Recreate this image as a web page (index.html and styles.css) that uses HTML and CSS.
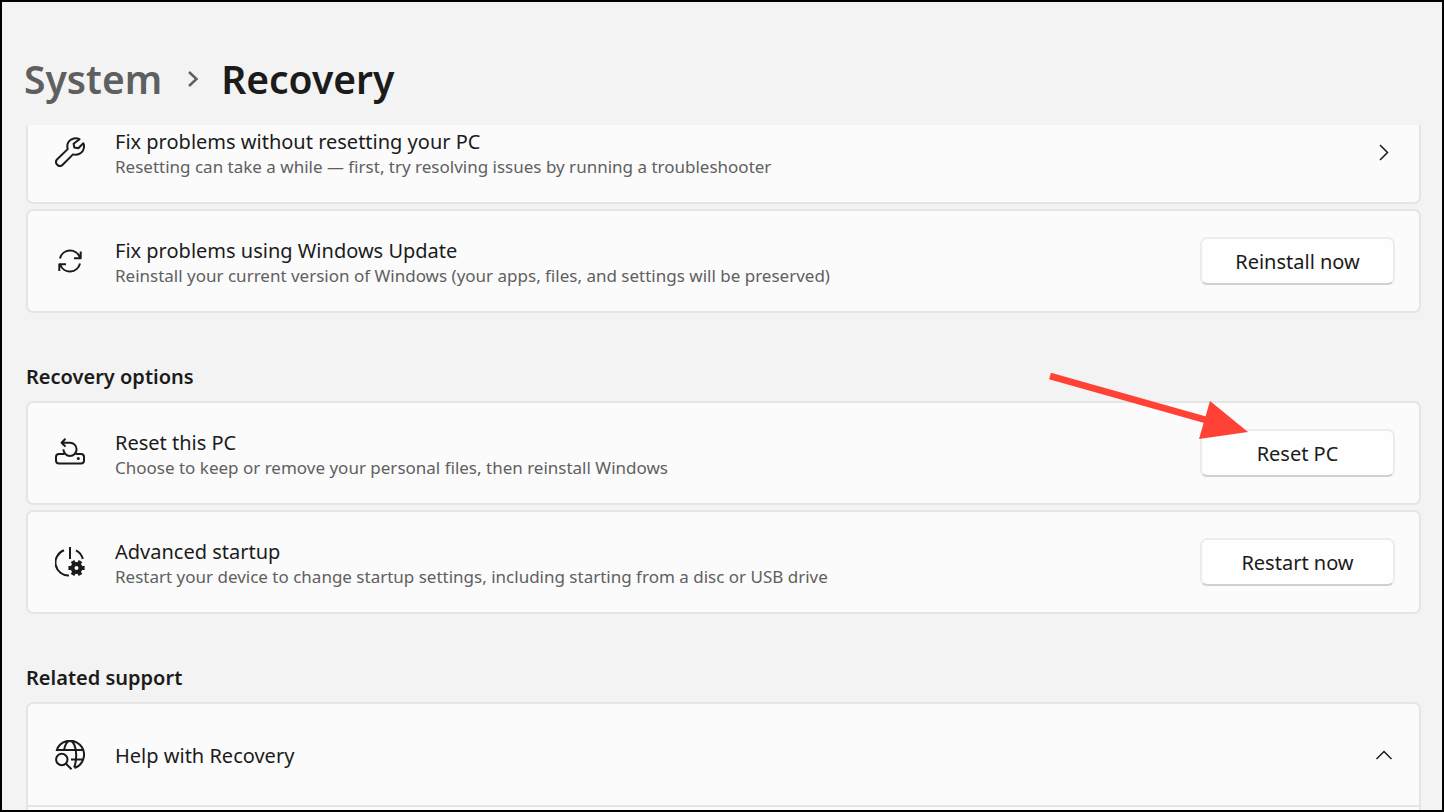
FILE: index.html
```html
<!DOCTYPE html>
<html lang="en">
<head>
    <meta charset="UTF-8">
    <meta name="viewport" content="width=device-width, initial-scale=1.0">
    <title>System - Recovery</title>
    <link rel="stylesheet" href="styles.css">
</head>
<body>
    <header class="breadcrumb">
        <a href="#" class="crumb">System</a>
        <svg class="crumb-arrow" viewBox="0 0 12 18" aria-hidden="true"><path d="M2 2l7.500 7L2 16"/></svg>
        <h1>Recovery</h1>
    </header>

    <main class="page">
        <div class="content">
            <a href="#" class="card">
                <svg class="icon" viewBox="0 0 30 30" aria-hidden="true">
                    <path d="M24.500 2.200C19.500-.3 12.200 3 12.300 9.500c0 1 .2 1.800.4 2.600L2.200 22.300c-3.400 3.700 1.700 9 5.500 5.500L18 17.400c6.500 1.700 11.500-3.300 11-8.600-.1-1-.3-1.800-.7-2.500l-5 5-4-.8-.7-3.700z"/>
                </svg>
                <div class="text">
                    <span class="title">Fix problems without resetting your PC</span>
                    <span class="desc">Resetting can take a while — first, try resolving issues by running a troubleshooter</span>
                </div>
                <svg class="chevron" viewBox="0 0 22 22" aria-hidden="true"><path d="M7 4l7.500 7.500L7 19"/></svg>
            </a>

            <div class="card">
                <svg class="icon" viewBox="0 0 30 30" aria-hidden="true">
                    <path d="M5 12.500A10.300 10.300 0 0 1 24.800 11.500M25.700 5.500v6.700h-6.700M25 17.500A10.300 10.300 0 0 1 5.200 18.500M4.300 25v-6.700h6.700"/>
                </svg>
                <div class="text">
                    <span class="title">Fix problems using Windows Update</span>
                    <span class="desc">Reinstall your current version of Windows (your apps, files, and settings will be preserved)</span>
                </div>
                <button type="button" class="action">Reinstall now</button>
            </div>

            <h2>Recovery options</h2>

            <div class="card">
                <svg class="icon" viewBox="0 0 30 30" aria-hidden="true">
                    <path d="M9.500 16H4a3 3 0 0 0-3 3v3.500a3 3 0 0 0 3 3h22a3 3 0 0 0 3-3V19a3 3 0 0 0-3-3h-5.500"/>
                    <path d="M10.500 .8L6.600 4.700l3.900 3.900M7 4.700h8a6.600 6.600 0 1 1-6.600 6.600"/>
                    <circle class="solid" cx="23.300" cy="20.500" r="1.500"/>
                </svg>
                <div class="text">
                    <span class="title">Reset this PC</span>
                    <span class="desc">Choose to keep or remove your personal files, then reinstall Windows</span>
                </div>
                <button type="button" class="action">Reset PC</button>
                <svg class="pointer" viewBox="0 0 202 70" aria-hidden="true">
                    <path class="pointer-line" d="M2 6l156 44"/>
                    <path class="pointer-head" d="M200 62l-38-31-11 38z"/>
                </svg>
            </div>

            <div class="card">
                <svg class="icon" viewBox="0 0 30 30" aria-hidden="true">
                    <path d="M15 0v12M9 3.300A13 13 0 0 0 14 28.500M21 3.300A13 13 0 0 1 27.800 12"/>
                    <circle class="gear" cx="21.500" cy="21" r="4"/>
                    <path class="gear" d="M26 21h3.600M23.800 24.900l1.700 3M19.200 24.900l-1.700 3M17 21h-3.600M19.200 17.100l-1.700-3M23.800 17.100l1.700-3"/>
                </svg>
                <div class="text">
                    <span class="title">Advanced startup</span>
                    <span class="desc">Restart your device to change startup settings, including starting from a disc or USB drive</span>
                </div>
                <button type="button" class="action">Restart now</button>
            </div>

            <h2>Related support</h2>

            <div class="expander">
                <button type="button" class="expander-head" aria-expanded="true">
                    <svg class="icon" viewBox="0 1 30 30" aria-hidden="true">
                        <path d="M1.500 12A14 14 0 1 1 19.500 29M2.500 11h25M16 20.500h12M9 11.500C10 5.500 12.500 2 15 2c3.500 0 6.200 6 6.200 14 0 5-.7 9.500-2.200 12.500"/>
                        <circle cx="6.800" cy="20.500" r="5.700"/>
                        <path d="M11 24.700l5.500 5.500"/>
                    </svg>
                    <span class="title">Help with Recovery</span>
                    <svg class="chevron" viewBox="0 0 22 22" aria-hidden="true"><path d="M3.500 15L11 7.500l7.500 7.500"/></svg>
                </button>
                <div class="expander-body"></div>
            </div>
        </div>
    </main>
</body>
</html>
```
FILE: styles.css
```css
* {
    box-sizing: border-box;
}
body {
    margin: 0;
    height: 100vh;
    display: flex;
    flex-direction: column;
    overflow: hidden;
    border: 2px solid #000;
    background-color: #f3f3f3;
    color: #1b1b1b;
    font-family: "Segoe UI", "Noto Sans", sans-serif;
}
.breadcrumb {
    display: flex;
    align-items: center;
    flex-shrink: 0;
    padding: 47px 22px 16px;
    line-height: 60px;
    font-size: 39px;
    font-weight: 600;
}
.crumb {
    color: #5f5f5f;
    text-decoration: none;
}
.crumb-arrow {
    width: 12px;
    height: 18px;
    margin: 0 22px 0 25px;
    fill: none;
    stroke: #5f5f5f;
    stroke-width: 2.5;
}
h1 {
    margin: 0;
    font-size: 39px;
    font-weight: 600;
}
.page {
    flex: 1;
    min-height: 0;
    overflow: hidden;
    padding: 0 21px 0 24px;
}
/* list is scrolled a little under the header */
.content {
    display: flex;
    flex-direction: column;
    gap: 5px;
    margin-top: -25px;
}
.card {
    position: relative;
    display: flex;
    align-items: center;
    gap: 30px;
    min-height: 104px;
    padding: 0 24px 0 27px;
    border: 2px solid #e5e5e5;
    border-radius: 7px;
    background-color: #fbfbfb;
    color: inherit;
    text-decoration: none;
}
.icon {
    width: 30px;
    height: 30px;
    flex-shrink: 0;
    fill: none;
    stroke: #1b1b1b;
    stroke-width: 2;
    stroke-linejoin: round;
}
.icon .solid {
    fill: #1b1b1b;
    stroke: none;
}
.icon .gear {
    stroke-width: 4;
}
.text {
    display: flex;
    flex-direction: column;
    flex: 1;
    padding-top: 2px;
}
.title {
    font-size: 20px;
    line-height: 28px;
}
.desc {
    font-size: 17px;
    line-height: 22px;
    color: #606060;
}
.chevron {
    width: 22px;
    height: 22px;
    flex-shrink: 0;
    fill: none;
    stroke: #1b1b1b;
    stroke-width: 1.5;
}
.action {
    width: 195px;
    height: 48px;
    padding: 0;
    border: 2px solid #ececec;
    border-bottom-color: #d0d0d0;
    border-radius: 7px;
    background-color: #fefefe;
    color: inherit;
    font-family: inherit;
    font-size: 20px;
}
h2 {
    margin: 0;
    height: 78px;
    padding-top: 45px;
    font-size: 20px;
    line-height: 28px;
    font-weight: 600;
}
.pointer {
    position: absolute;
    top: -33px;
    right: 169px;
    width: 202px;
    height: 70px;
}
.pointer-line {
    stroke: #ff4136;
    stroke-width: 7;
}
.pointer-head {
    fill: #ff4136;
}
.expander {
    border: 2px solid #e5e5e5;
    border-radius: 7px;
    background-color: #fbfbfb;
}
.expander-head {
    display: flex;
    align-items: center;
    gap: 30px;
    width: 100%;
    height: 101px;
    padding: 0 24px 0 27px;
    border: none;
    background: none;
    color: inherit;
    font-family: inherit;
    text-align: left;
}
.expander-head .title {
    flex: 1;
    padding-top: 2px;
}
.expander-body {
    height: 100px;
    border-top: 2px solid #e5e5e5;
}
```
